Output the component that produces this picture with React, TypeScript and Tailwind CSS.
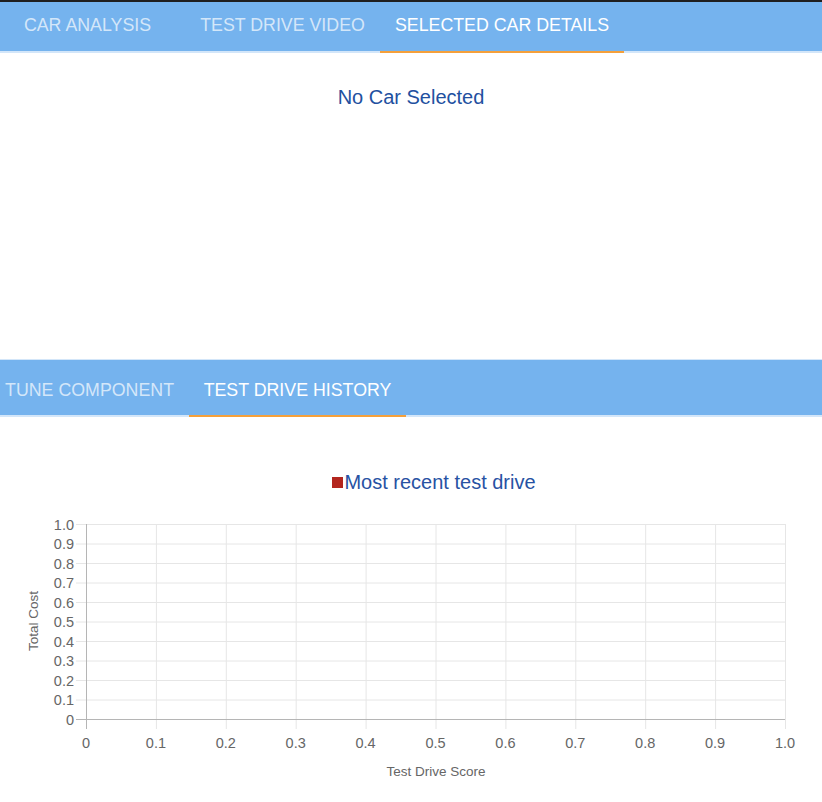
import React from 'react';

const font = { fontFamily: '"Liberation Sans", Arial, Helvetica, sans-serif' };

const ticks = [0, 0.1, 0.2, 0.3, 0.4, 0.5, 0.6, 0.7, 0.8, 0.9, 1];

function tickLabel(v: number) {
  if (v === 0) return '0';
  if (v === 1) return '1.0';
  return v.toFixed(1);
}

function HistoryChart() {
  const left = 86;
  const right = 785;
  const top = 30;
  const bottom = 225;
  const xAt = (v: number) => left + (right - left) * v;
  const yAt = (v: number) => bottom - (bottom - top) * v;

  return (
    <svg width={822} height={308} className="block" style={font}>
      {/* grid */}
      {ticks.map((t) => (
        <line key={'gy' + t} x1={76} x2={right} y1={yAt(t) + 0.5} y2={yAt(t) + 0.5} stroke="#e6e6e6" strokeWidth={1} />
      ))}
      {ticks.map((t) => (
        <line key={'gx' + t} x1={xAt(t) + 0.5} x2={xAt(t) + 0.5} y1={top} y2={bottom + 10} stroke="#e6e6e6" strokeWidth={1} />
      ))}
      {/* zero axes */}
      <line x1={left + 0.5} x2={left + 0.5} y1={top} y2={bottom + 10} stroke="#b5b5b5" strokeWidth={1} />
      <line x1={76} x2={right} y1={bottom + 0.5} y2={bottom + 0.5} stroke="#b5b5b5" strokeWidth={1} />

      {ticks.map((t) => (
        <text key={'ly' + t} x={74} y={yAt(t) + 5.5} textAnchor="end" fontSize={14.5} fill="#666">
          {tickLabel(t)}
        </text>
      ))}
      {ticks.map((t) => (
        <text key={'lx' + t} x={xAt(t)} y={254} textAnchor="middle" fontSize={14.5} fill="#666">
          {tickLabel(t)}
        </text>
      ))}

      <text x={436} y={282} textAnchor="middle" fontSize={13.5} fill="#666">
        Test Drive Score
      </text>
      <text x={0} y={0} transform="translate(38 127) rotate(-90)" textAnchor="middle" fontSize={13.5} fill="#666">
        Total Cost
      </text>
    </svg>
  );
}

export default function App() {
  return (
    <div className="w-[822px] h-[802px] bg-white overflow-hidden" style={font}>
      {/* top tab bar */}
      <div className="border-t-2 border-[#1f1f1f] bg-[#75b3ee]">
        <div className="flex h-[51px] text-[17.8px] leading-[20px]">
          <div className="w-[175px] flex justify-center pt-[13px] text-white/70 border-b-2 border-[#d3e6f9] whitespace-nowrap">
            CAR ANALYSIS
          </div>
          <div className="w-[205px] flex justify-center pl-[10px] pt-[13px] text-white/70 border-b-2 border-[#d3e6f9] whitespace-nowrap">
            TEST DRIVE VIDEO
          </div>
          <div className="w-[244px] flex justify-center pt-[13px] text-white border-b-2 border-[#f5a03a] whitespace-nowrap">
            SELECTED CAR DETAILS
          </div>
          <div className="flex-1 border-b-2 border-[#d3e6f9]" />
        </div>
      </div>

      {/* selected car content */}
      <div className="h-[306px] flex justify-center pt-[32px]">
        <div className="text-[20px] leading-[24px] text-[#22509f]">No Car Selected</div>
      </div>

      {/* bottom tab bar */}
      <div className="border-t border-[#d3e6f9] bg-[#75b3ee]">
        <div className="flex h-[57px] text-[17.8px] leading-[20px]">
          <div className="w-[189px] flex justify-end pr-[15px] pt-[20px] text-white/70 border-b-2 border-[#d3e6f9] whitespace-nowrap">
            TUNE COMPONENT
          </div>
          <div className="w-[217px] flex justify-center pt-[20px] text-white border-b-2 border-[#f5a03a] whitespace-nowrap">
            TEST DRIVE HISTORY
          </div>
          <div className="flex-1 border-b-2 border-[#d3e6f9]" />
        </div>
      </div>

      {/* chart */}
      <div className="pt-[53px]">
        <div className="flex justify-center items-center pl-[46px] h-[24px]">
          <span className="w-[11px] h-[11px] bg-[#b3261e] mr-[1px]" />
          <span className="text-[20px] leading-[24px] text-[#2752a3]">Most recent test drive</span>
        </div>
        <HistoryChart />
      </div>
    </div>
  );
}
